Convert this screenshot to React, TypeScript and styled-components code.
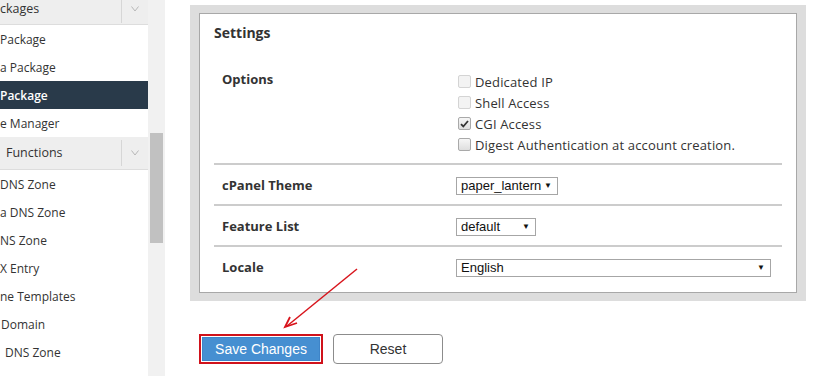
import React from 'react';
import styled, { createGlobalStyle } from 'styled-components';

const GlobalStyle = createGlobalStyle`
  html, body {
    margin: 0;
    padding: 0;
    background: #fff;
    overflow: hidden;
  }
  body {
    font-family: "Open Sans", "Liberation Sans", sans-serif;
    color: #333;
  }
`;

const Page = styled.div`
  position: relative;
  width: 825px;
  height: 376px;
  display: flex;
  overflow: hidden;
`;

const Sidebar = styled.nav`
  width: 148px;
  flex-shrink: 0;
  display: flex;
  flex-direction: column;
  font-size: 12px;
`;

const GroupHeading = styled.div<{ $height: number; $indent: number; $top?: boolean }>`
  height: ${p => p.$height}px;
  flex-shrink: 0;
  display: flex;
  align-items: ${p => (p.$top ? 'flex-start' : 'center')};
  justify-content: space-between;
  background: #eeeeee;
  border-bottom: 1px solid #dddddd;
  box-sizing: border-box;
  padding-left: ${p => p.$indent}px;
  font-size: 12.5px;
  line-height: 18px;
  color: #333;
`;

const Chevron = styled.span<{ $top?: boolean }>`
  width: 26px;
  align-self: stretch;
  margin: ${p => (p.$top ? '0 0 1px' : '3px 0')};
  border-left: 1px solid #d6d6d6;
  display: flex;
  align-items: ${p => (p.$top ? 'flex-start' : 'center')};
  padding-top: ${p => (p.$top ? 6 : 0)}px;
  justify-content: center;
`;

const NavItem = styled.div<{ $active?: boolean; $indent?: number }>`
  height: 28px;
  flex-shrink: 0;
  display: flex;
  align-items: center;
  padding-left: ${p => p.$indent ?? 0}px;
  background: ${p => (p.$active ? '#293a4a' : '#fff')};
  color: ${p => (p.$active ? '#fff' : '#333')};
  font-weight: ${p => (p.$active ? 600 : 400)};
`;

const ScrollTrack = styled.div`
  width: 17px;
  flex-shrink: 0;
  background: #f1f1f1;
  padding: 133px 2px 0;
  box-sizing: border-box;
`;

const ScrollThumb = styled.div`
  height: 110px;
  background: #c1c1c1;
`;

const Main = styled.main`
  flex: 1;
  padding: 5px 0 0 25px;
  display: flex;
  flex-direction: column;
  align-items: flex-start;
`;

const Panel = styled.section`
  width: 616px;
  background: #dddddd;
  padding: 8px 9px;
  box-sizing: border-box;
`;

const SettingsBox = styled.div`
  background: #fff;
  border: 1px solid #a8a8a8;
  padding: 9px 14px 6px;
`;

const Title = styled.h2`
  margin: 0;
  font-size: 14px;
  line-height: 20px;
  font-weight: 700;
  color: #333;
`;

const Table = styled.div`
  margin-top: 19px;
  display: flex;
  flex-direction: column;
`;

const Row = styled.div<{ $tall?: boolean }>`
  display: flex;
  align-items: ${p => (p.$tall ? 'flex-start' : 'center')};
  height: ${p => (p.$tall ? 101 : 37)}px;
  padding: ${p => (p.$tall ? '7px 8px 0' : '2px 8px 0')};
  box-sizing: border-box;
  & + & {
    border-top: 2px solid #cccccc;
    box-sizing: content-box;
  }
`;

const Label = styled.div`
  width: 234px;
  font-size: 13px;
  font-weight: 700;
  line-height: 19px;
  color: #333;
`;

const CheckList = styled.div`
  display: flex;
  flex-direction: column;
  padding-top: 2px;
  padding-left: 2px;
`;

const CheckLine = styled.label`
  display: flex;
  align-items: center;
  height: 21px;
  font-size: 13px;
  color: #333;
  letter-spacing: 0.15px;
`;

const Box = styled.span<{ $disabled?: boolean }>`
  width: 11px;
  height: 11px;
  margin-right: 4px;
  border: 1px solid ${p => (p.$disabled ? '#d4d4d4' : '#a9a9a9')};
  border-radius: 2px;
  background: ${p =>
    p.$disabled ? '#f3f3f3' : 'linear-gradient(#f6f6f6, #dedede)'};
  display: flex;
  align-items: center;
  justify-content: center;
`;

const Select = styled.div<{ $width: number }>`
  width: ${p => p.$width}px;
  height: 18px;
  box-sizing: border-box;
  border: 1px solid #a6a6a6;
  display: flex;
  align-items: center;
  justify-content: space-between;
  padding: 0 5px 0 4px;
  font-family: "Liberation Sans", Arial, sans-serif;
  font-size: 13px;
  color: #111;
  background: #fff;
`;

const Caret = styled.span`
  font-size: 8px;
  color: #111;
`;

const Actions = styled.div`
  margin-top: 33px;
  padding-left: 9px;
  display: flex;
  gap: 10px;
`;

const Highlight = styled.div`
  border: 2px solid #d0121b;
  padding: 1px;
  display: flex;
`;

const Button = styled.button<{ $primary?: boolean }>`
  height: ${p => (p.$primary ? 24 : 30)}px;
  width: ${p => (p.$primary ? 118 : 110)}px;
  border-radius: ${p => (p.$primary ? 0 : 4)}px;
  border: 1px solid ${p => (p.$primary ? '#3e84c8' : '#8c8c8c')};
  background: ${p => (p.$primary ? '#468fd1' : '#fff')};
  color: ${p => (p.$primary ? '#fff' : '#333')};
  font-family: "Liberation Sans", Arial, sans-serif;
  font-size: 14px;
  padding: 0;
  cursor: pointer;
`;

const Annotation = styled.svg`
  position: absolute;
  left: 0;
  top: 0;
  pointer-events: none;
`;

const ChevronIcon = () => (
  <svg width="8" height="6" viewBox="0 0 8 6">
    <polyline points="0.5,0.5 4,5 7.5,0.5" fill="none" stroke="#b8b8b8" strokeWidth="1" />
  </svg>
);

const CheckMark = () => (
  <svg width="9" height="8" viewBox="0 0 9 8">
    <polyline points="1,4.2 3.3,6.5 8,1" fill="none" stroke="#333" strokeWidth="1.8" />
  </svg>
);

const options = [
  { label: 'Dedicated IP', checked: false, disabled: true },
  { label: 'Shell Access', checked: false, disabled: true },
  { label: 'CGI Access', checked: true, disabled: false },
  { label: 'Digest Authentication at account creation.', checked: false, disabled: false },
];

const packageItems = [
  { text: 'Package' },
  { text: 'a Package' },
  { text: 'Package', active: true },
  { text: 'e Manager' },
];

const dnsItems = [
  { text: 'DNS Zone' },
  { text: 'a DNS Zone' },
  { text: 'NS Zone' },
  { text: 'X Entry' },
  { text: 'ne Templates' },
  { text: 'Domain', indent: 1 },
  { text: 'DNS Zone', indent: 5 },
];

export default function App() {
  return (
    <>
      <GlobalStyle />
      <Page>
        <Sidebar>
          <GroupHeading $height={25} $indent={0} $top>
            <span>ckages</span>
            <Chevron $top>
              <ChevronIcon />
            </Chevron>
          </GroupHeading>
          {packageItems.map((item, i) => (
            <NavItem key={i} $active={item.active}>
              {item.text}
            </NavItem>
          ))}
          <GroupHeading $height={33} $indent={6}>
            <span>Functions</span>
            <Chevron>
              <ChevronIcon />
            </Chevron>
          </GroupHeading>
          {dnsItems.map((item, i) => (
            <NavItem key={i} $indent={item.indent}>
              {item.text}
            </NavItem>
          ))}
        </Sidebar>
        <ScrollTrack>
          <ScrollThumb />
        </ScrollTrack>

        <Main>
          <Panel>
            <SettingsBox>
              <Title>Settings</Title>
              <Table>
                <Row $tall>
                  <Label style={{ paddingTop: 1 }}>Options</Label>
                  <CheckList>
                    {options.map(o => (
                      <CheckLine key={o.label}>
                        <Box $disabled={o.disabled}>{o.checked && <CheckMark />}</Box>
                        {o.label}
                      </CheckLine>
                    ))}
                  </CheckList>
                </Row>
                <Row>
                  <Label>cPanel Theme</Label>
                  <Select $width={102}>
                    paper_lantern <Caret>▼</Caret>
                  </Select>
                </Row>
                <Row>
                  <Label>Feature List</Label>
                  <Select $width={80}>
                    default <Caret>▼</Caret>
                  </Select>
                </Row>
                <Row>
                  <Label>Locale</Label>
                  <Select $width={315}>
                    English <Caret>▼</Caret>
                  </Select>
                </Row>
              </Table>
            </SettingsBox>
          </Panel>

          <Actions>
            <Highlight>
              <Button $primary>Save Changes</Button>
            </Highlight>
            <Button>Reset</Button>
          </Actions>
        </Main>

        <Annotation width="825" height="376" viewBox="0 0 825 376">
          <line x1="357" y1="269" x2="287" y2="326" stroke="#d8141c" strokeWidth="1.5" />
          <polyline
            points="290,317 285,327 297,323"
            fill="none"
            stroke="#d8141c"
            strokeWidth="1.8"
          />
        </Annotation>
      </Page>
    </>
  );
}
